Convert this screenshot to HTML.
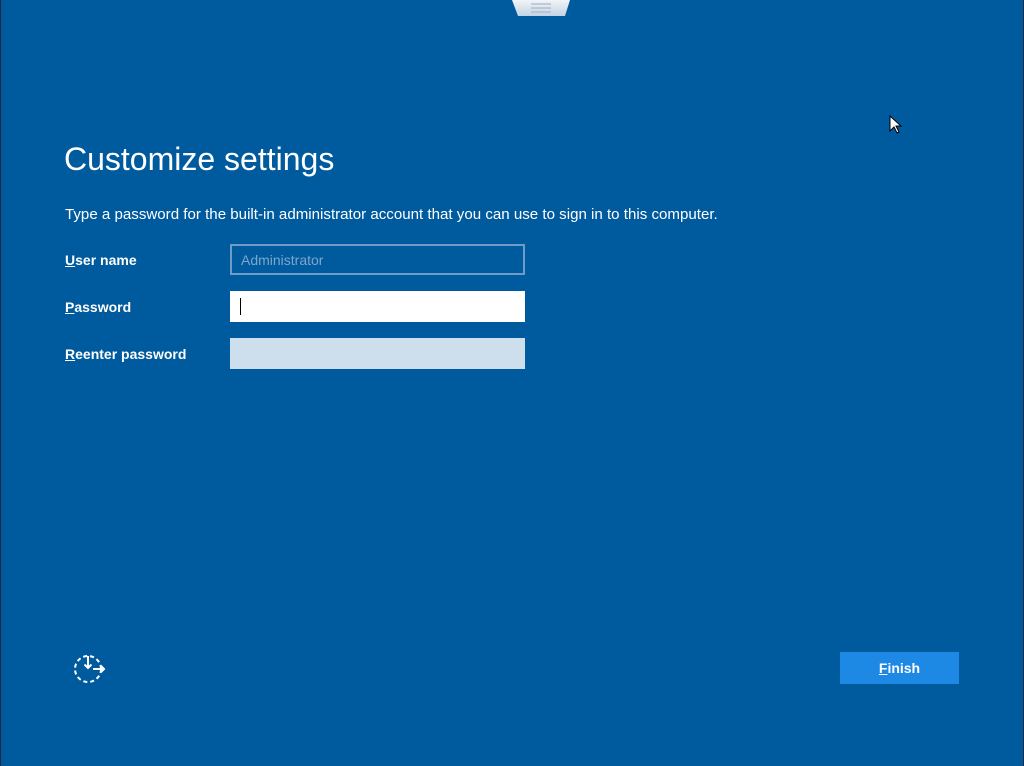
<!DOCTYPE html>
<html><head><meta charset="utf-8"><style>
html,body{margin:0;padding:0}
body{width:1024px;height:766px;background:#005a9e;position:relative;overflow:hidden;font-family:"Liberation Sans",sans-serif;color:#fff;border-left:1px solid #1a2a3a;border-right:1px solid #1a2a3a;box-sizing:border-box}
.a{position:absolute}
h1{position:absolute;left:63px;top:141px;margin:0;font-weight:300;font-size:32px}
.desc{left:64px;top:206px;font-size:15.1px}
.lbl{left:64px;font-size:14px;font-weight:bold}
.box{left:229px;width:295px;height:31px;box-sizing:border-box}
</style></head><body>
<svg class="a" style="left:509px;top:0" width="62" height="18"><defs><linearGradient id="g" x1="0" y1="0" x2="0" y2="1"><stop offset="0" stop-color="#f2f4f7"/><stop offset="1" stop-color="#c3d3e4"/></linearGradient></defs><path d="M2 0 L60 0 L55 16 L8 16 Z" fill="url(#g)"/><path d="M21 4h20M21 8h20M21 12h20" stroke="#a9b9cc" stroke-width="1.2"/></svg>
<h1>Customize settings</h1>
<div class="a desc">Type a password for the built-in administrator account that you can use to sign in to this computer.</div>
<div class="a lbl" style="top:252px"><u>U</u>ser name</div>
<div class="a lbl" style="top:299px"><u>P</u>assword</div>
<div class="a lbl" style="top:346px"><u>R</u>eenter password</div>
<div class="a box" style="top:244px;border:2px solid #6f9bc6;color:#7ea6cc;font-size:14px;padding:6px 0 0 9px">Administrator</div>
<div class="a box" style="top:291px;background:#fff"><div class="a" style="left:10px;top:7px;width:1px;height:17px;background:#000"></div></div>
<div class="a box" style="top:338px;background:#cddeec"></div>
<svg class="a" style="left:71px;top:653px" width="36" height="32"><g fill="none" stroke="#fff" stroke-width="2"><circle cx="16" cy="16" r="13" stroke-dasharray="4 3"/><path d="M16 3v12M12.5 11.5l3.5 3.5 3.5-3.5M21 16h11M29 13l3 3-3 3"/></g></svg>
<div class="a" style="left:839px;top:652px;width:119px;height:32px;background:#1e88e5;font-size:14px;font-weight:bold;text-align:center;line-height:32px"><u>F</u>inish</div>
<svg class="a" style="left:888px;top:115px" width="14" height="20"><path d="M1 1v15l4-4 3 6 2-1-3-6h5z" fill="#fff" stroke="#000" stroke-width="1"/></svg>
</body></html>
